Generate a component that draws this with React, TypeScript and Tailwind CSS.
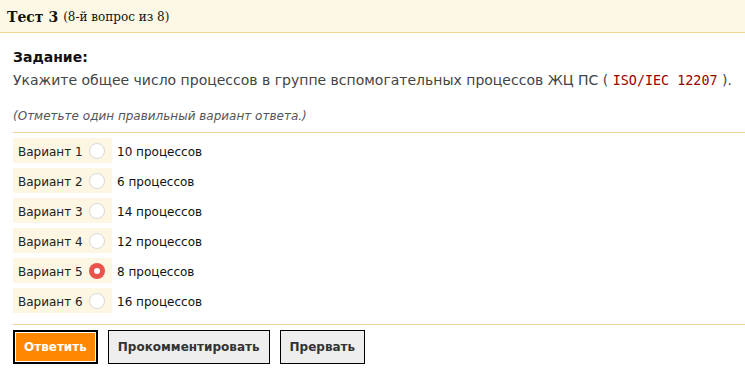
import React from "react";

const options = [
  { label: "Вариант 1", text: "10 процессов", checked: false },
  { label: "Вариант 2", text: "6 процессов", checked: false },
  { label: "Вариант 3", text: "14 процессов", checked: false },
  { label: "Вариант 4", text: "12 процессов", checked: false },
  { label: "Вариант 5", text: "8 процессов", checked: true },
  { label: "Вариант 6", text: "16 процессов", checked: false },
];

function Radio({ checked }: { checked: boolean }) {
  if (checked) {
    return (
      <span className="flex h-[16px] w-[16px] items-center justify-center rounded-full bg-[#e9534b]">
        <span className="block h-[6px] w-[6px] rounded-full bg-white" />
      </span>
    );
  }
  return <span className="block h-[16px] w-[16px] rounded-full border border-[#d8d8d8] bg-white" />;
}

export default function App() {
  return (
    <div className="w-[745px] h-[378px] bg-white font-['DejaVu_Sans',sans-serif] text-[#222]">
      <div className="h-[33px] bg-[#fcf8e5] border-b border-[#ecd595] pl-[7px] pt-[1px] flex items-center font-['DejaVu_Serif',serif] text-[#111]">
        <span className="text-[14px] font-bold leading-none">Тест 3</span>
        <span className="ml-[5px] text-[12px] leading-none">(8-й вопрос из 8)</span>
      </div>
      <div className="pl-[13px]">
        <div className="mt-[16px] text-[14px] leading-4 font-bold text-[#111]">Задание:</div>
        <div className="mt-[7px] text-[14px] leading-4 text-[#444]">
          Укажите общее число процессов в группе вспомогательных процессов ЖЦ ПС ({" "}
          <span className="font-['DejaVu_Sans_Mono',monospace] text-[13.4px] text-[#990000]">ISO/IEC 12207</span> ).
        </div>
        <div className="mt-[19px] text-[12px] leading-4 italic text-[#555]">
          (Отметьте один правильный вариант ответа.)
        </div>
        <div className="mt-[8px] h-px bg-[#ecd595]" />
        <div className="mt-[5px] flex flex-col gap-[5px]">
          {options.map((o) => (
            <div key={o.label} className="flex items-center h-[25px]">
              <div className="flex items-center h-full w-[99px] bg-[#fcf6e2] pl-[5px]">
                <span className="text-[12px] leading-none pt-[3px] text-[#222]">{o.label}</span>
                <span className="ml-[6px]">
                  <Radio checked={o.checked} />
                </span>
              </div>
              <span className="ml-[5px] text-[12px] leading-none pt-[3px] text-[#111]">{o.text}</span>
            </div>
          ))}
        </div>
        <div className="mt-[11px] h-px bg-[#ecd595]" />
        <div className="mt-[5px] flex gap-[10px]">
          <button className="h-[34px] border-2 border-black bg-[#ff8800] px-[9px] text-[12px] font-bold text-white shadow-[inset_0_0_0_1px_#ffffff]">
            Ответить
          </button>
          <button className="h-[34px] border border-black bg-[#eeeeee] px-[9px] text-[12px] font-bold text-[#333]">
            Прокомментировать
          </button>
          <button className="h-[34px] border border-black bg-[#eeeeee] px-[9px] text-[12px] font-bold text-[#333]">
            Прервать
          </button>
        </div>
      </div>
    </div>
  );
}
